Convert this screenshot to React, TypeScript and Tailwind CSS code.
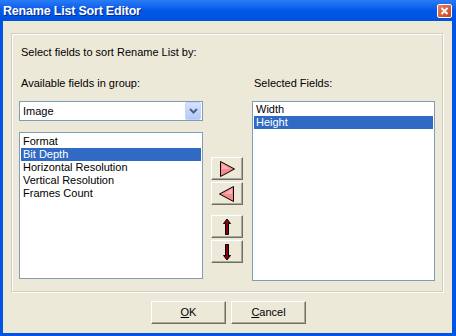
import React from 'react';

const font = { fontFamily: '"Liberation Sans", Arial, sans-serif' };

const RaisedButton: React.FC<{ className?: string; children: React.ReactNode }> = ({ className = '', children }) => (
  <button
    className={`flex items-center justify-center bg-[#ECE9D8] border border-t-white border-l-white border-r-[#716F64] border-b-[#716F64] shadow-[inset_-1px_-1px_0_#ACA899] ${className}`}
  >
    {children}
  </button>
);

const TriangleRight = () => (
  <svg width="20" height="18" viewBox="0 0 20 18">
    <path d="M3.5 1.5 L17.5 9 L3.5 16.5 Z" fill="#F7898F" stroke="#000" strokeWidth="1" />
    <path d="M5 4 L13 9 L5 9 Z" fill="#FBB3B6" />
  </svg>
);

const TriangleLeft = () => (
  <svg width="20" height="18" viewBox="0 0 20 18">
    <path d="M16.5 1.5 L2.5 9 L16.5 16.5 Z" fill="#F7898F" stroke="#000" strokeWidth="1" />
    <path d="M15 4 L7 9 L15 9 Z" fill="#FBB3B6" />
  </svg>
);

const ArrowUp = () => (
  <svg width="10" height="18" viewBox="0 0 10 18">
    <path d="M5 1 L8.5 5.5 L6.5 5.5 L6.5 16.5 L3.5 16.5 L3.5 5.5 L1.5 5.5 Z" fill="#8B0000" stroke="#000" strokeWidth="1" strokeLinejoin="miter" />
  </svg>
);

const ArrowDown = () => (
  <svg width="10" height="18" viewBox="0 0 10 18">
    <path d="M5 17 L8.5 12.5 L6.5 12.5 L6.5 1.5 L3.5 1.5 L3.5 12.5 L1.5 12.5 Z" fill="#8B0000" stroke="#000" strokeWidth="1" strokeLinejoin="miter" />
  </svg>
);

const ListBox: React.FC<{ items: string[]; selected: number; className?: string }> = ({ items, selected, className = '' }) => (
  <div className={`bg-white border border-[#7F9DB9] p-px ${className}`}>
    {items.map((item, i) => (
      <div
        key={item}
        className={`h-[13px] leading-[13px] pl-[2px] text-[11px] ${i === selected ? 'bg-[#316AC5] text-white' : 'text-black'}`}
      >
        {item}
      </div>
    ))}
  </div>
);

export default function App() {
  return (
    <div className="w-[456px] h-[336px] flex flex-col bg-[#0055E5] select-none" style={font}>
      {/* title bar */}
      <div className="h-[21px] flex items-center pl-[3px] pr-[4px] bg-gradient-to-b from-[#2B7BF5] via-[#0058E8] to-[#0052DC]">
        <span className="text-white font-bold text-[12.5px] tracking-[-0.2px] mt-[1px] [text-shadow:1px_1px_0_#0A2A8A]">Rename List Sort Editor</span>
        <div className="flex-grow" />
        <div className="w-[15px] h-[14px] rounded-[2px] border border-white bg-gradient-to-br from-[#E8805E] to-[#C8401E] flex items-center justify-center">
          <svg width="9" height="8" viewBox="0 0 9 8">
            <path d="M1.5 1 L7.5 7 M7.5 1 L1.5 7" stroke="#fff" strokeWidth="1.8" />
          </svg>
        </div>
      </div>

      {/* body */}
      <div className="flex-1 ml-[3px] mr-[4px] mb-[3px] bg-[#ECE9D8] flex flex-col items-center pt-[12px]">
        {/* group frame */}
        <div className="w-[432px] h-[259px] ml-[-1px] border border-[#D0D0BF] shadow-[inset_1px_1px_0_#fff,1px_1px_0_#fff] px-[7px] pt-[12px]">
          <div className="text-[11px] leading-[13px] text-black pl-[2px]">Select fields to sort Rename List by:</div>

          <div className="flex mt-[18px]">
            {/* left column */}
            <div className="w-[184px] flex flex-col">
              <div className="text-[11px] leading-[13px] text-black pl-[2px]">Available fields in group:</div>
              <div className="mt-[11px] h-[20px] bg-white border border-[#7F9DB9] flex items-center">
                <span className="text-[11px] pl-[3px] text-black flex-grow">Image</span>
                <div className="w-[16px] h-[18px] mr-px rounded-[2px] bg-gradient-to-b from-[#D6E3FD] to-[#B2C8F6] border border-[#C3D3FD] flex items-center justify-center">
                  <svg width="9" height="6" viewBox="0 0 9 6">
                    <path d="M1 1 L4.5 4.5 L8 1" stroke="#4D6185" strokeWidth="2" fill="none" />
                  </svg>
                </div>
              </div>
              <ListBox
                className="mt-[11px] h-[147px] pt-[2px]"
                items={['Format', 'Bit Depth', 'Horizontal Resolution', 'Vertical Resolution', 'Frames Count']}
                selected={1}
              />
            </div>

            {/* middle buttons */}
            <div className="w-[32px] ml-[8px] flex flex-col pt-[80px] gap-[2px]">
              <RaisedButton className="h-[23px]"><TriangleRight /></RaisedButton>
              <RaisedButton className="h-[23px]"><TriangleLeft /></RaisedButton>
              <RaisedButton className="h-[23px] mt-[8px]"><ArrowUp /></RaisedButton>
              <RaisedButton className="h-[23px]"><ArrowDown /></RaisedButton>
            </div>

            {/* right column */}
            <div className="w-[183px] ml-[9px] flex flex-col">
              <div className="text-[11px] leading-[13px] text-black pl-[2px]">Selected Fields:</div>
              <ListBox className="mt-[11px] h-[180px]" items={['Width', 'Height']} selected={1} />
            </div>
          </div>
        </div>

        {/* dialog buttons */}
        <div className="flex gap-[5px] mt-[9px] ml-[2px]">
          <RaisedButton className="w-[75px] h-[23px] text-[11px] text-black">
            <span><span className="underline">O</span>K</span>
          </RaisedButton>
          <RaisedButton className="w-[75px] h-[23px] text-[11px] text-black">
            <span><span className="underline">C</span>ancel</span>
          </RaisedButton>
        </div>
      </div>
    </div>
  );
}
